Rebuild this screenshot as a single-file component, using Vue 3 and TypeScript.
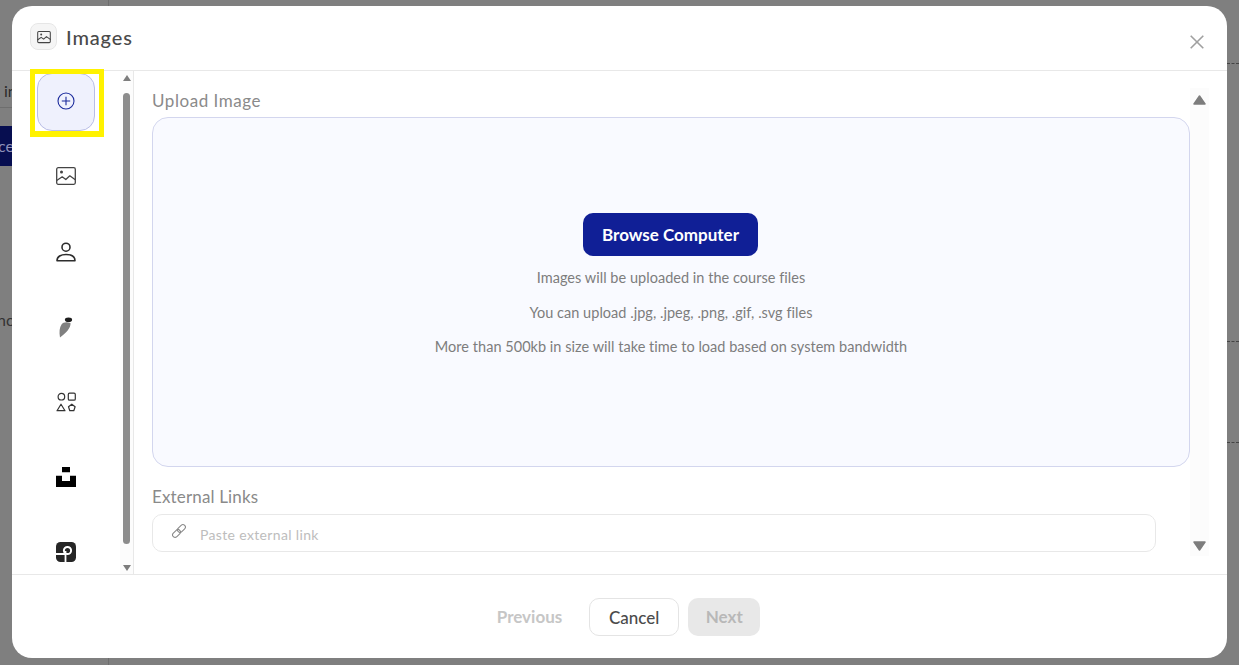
<script setup lang="ts">
const sideItems = ['add', 'image', 'user', 'feather', 'shapes', 'unsplash', 'pexels']
const notes = [
  'Images will be uploaded in the course files',
  'You can upload .jpg, .jpeg, .png, .gif, .svg files',
  'More than 500kb in size will take time to load based on system bandwidth',
]
</script>

<template>
  <div class="page">
    <div class="bg-frag bg-in">in</div>
    <div class="bg-frag bg-btn">ce</div>
    <div class="bg-frag bg-nc">nc</div>
    <div class="bg-line l1"></div>
    <div class="bg-line l2"></div>
    <div class="bg-line l3"></div>
    <div class="bg-dash d1"></div>
    <div class="bg-dash d2"></div>
    <div class="bg-dash d3"></div>

    <section class="modal">
      <header class="head">
        <div class="title-wrap">
          <span class="title-icon">
            <svg width="14" height="14" viewBox="0 0 20 20" fill="none" stroke="#444" stroke-width="1.5" stroke-linejoin="round" stroke-linecap="round">
              <rect x="1" y="2" width="18" height="16" rx="1.5" />
              <circle cx="6" cy="6.5" r="1.4" fill="#444" stroke="none" />
              <path d="M1 14l5-3.5 3.5 2.5 4-3.5 5.5 4" />
            </svg>
          </span>
          <span class="title">Images</span>
        </div>
        <button class="close" aria-label="Close">
          <svg width="14" height="14" viewBox="0 0 14 14" stroke="#a0a0a0" stroke-width="1.6" fill="none"><path d="M.7.7l12.6 12.6M13.3.7L.7 13.3" /></svg>
        </button>
      </header>

      <div class="body">
        <aside class="side">
          <div class="side-list">
            <div v-for="item in sideItems" :key="item" class="side-item" :class="{ active: item === 'add' }">
              <svg v-if="item === 'add'" class="add-icon" width="18" height="18" viewBox="0 0 18 18" fill="none" stroke="#1a2a9c" stroke-width="1.1">
                <circle cx="9" cy="9" r="8" />
                <path d="M9 4.8v8.4M4.8 9h8.4" />
              </svg>
              <svg v-else-if="item === 'image'" class="image-icon" width="20" height="18" viewBox="0 0 20 18" fill="none" stroke="#444" stroke-width="1.3" stroke-linejoin="round">
                <rect x=".7" y=".7" width="18.6" height="16.6" rx="1.5" />
                <circle cx="5.5" cy="5" r="1.5" fill="#444" stroke="none" />
                <path d="M.7 13.5l5.5-3.7 3.6 2.7 4-3.7 5.5 4" />
              </svg>
              <svg v-else-if="item === 'user'" width="20" height="20" viewBox="0 0 20 20" fill="none" stroke="#2d2d2d" stroke-width="1.6">
                <circle cx="10" cy="5.2" r="4" />
                <path d="M1 18.800c0-4.500 4-6.300 9-6.300s9 1.800 9 6.300z" stroke-linejoin="round" />
              </svg>
              <svg v-else-if="item === 'feather'" class="feather" width="16" height="22" viewBox="0 0 16 22">
                <path d="M3.500 8.500C5 6 9 5.500 12.500 7C13 12 8 17 2 21.500C1 16 1.500 11.500 3.500 8.500z" fill="#808080" />
                <ellipse cx="10.500" cy="3.800" rx="3.600" ry="2.300" fill="#1f1f1f" />
              </svg>
              <svg v-else-if="item === 'shapes'" width="20" height="20" viewBox="0 0 20 20" fill="none" stroke="#333" stroke-width="1.2" stroke-linejoin="round">
                <circle cx="5.400" cy="4.700" r="3.300" />
                <rect x="12.300" y="1.200" width="7" height="7" rx="1.300" />
                <path d="M5 12.200l4 6.500H1z" />
                <path d="M15.800 12.200l3.300 2.500-1.300 4h-4l-1.300-4z" />
              </svg>
              <svg v-else-if="item === 'unsplash'" width="20" height="20" viewBox="0 0 20 20" fill="#000">
                <path d="M6 0h8v5.200H6zM0 8.800h6v5.200h8V8.800h6V20H0z" />
              </svg>
              <svg v-else width="20" height="20" viewBox="0 0 20 20">
                <rect width="20" height="20" rx="4.500" fill="#262626" />
                <circle cx="11.500" cy="8.500" r="3.600" fill="none" stroke="#fff" stroke-width="2" />
                <path d="M0 12h9.500M9.500 9V20" stroke="#fff" stroke-width="1.800" fill="none" />
              </svg>
            </div>
          </div>
          <div class="fake-scroll side-scroll">
            <span class="arrow up small"></span>
            <span class="thumb"></span>
            <span class="arrow down small"></span>
          </div>
        </aside>

        <main class="content">
          <div class="form">
            <h3 class="label">Upload Image</h3>
            <div class="drop">
              <button class="browse">Browse Computer</button>
              <p v-for="n in notes" :key="n" class="note">{{ n }}</p>
            </div>
            <h3 class="label ext">External Links</h3>
            <div class="link-field">
              <svg width="16" height="16" viewBox="0 0 16 16" fill="none" stroke="#8a8a8a" stroke-width="1.100">
                <g transform="rotate(-45 8 8)">
                  <rect x="0" y="5.500" width="9" height="5" rx="2.500" />
                  <rect x="7" y="5.500" width="9" height="5" rx="2.500" />
                </g>
              </svg>
              <span class="placeholder">Paste external link</span>
            </div>
          </div>
          <div class="fake-scroll main-scroll">
            <svg class="tri tri-up" width="13" height="10" viewBox="0 0 13 10"><path d="M6.500 1L12 9H1z" fill="#7d7d7d" stroke="#7d7d7d" stroke-width="1.500" stroke-linejoin="round" /></svg>
            <svg class="tri tri-down" width="13" height="10" viewBox="0 0 13 10"><path d="M6.500 9L12 1H1z" fill="#7d7d7d" stroke="#7d7d7d" stroke-width="1.500" stroke-linejoin="round" /></svg>
          </div>
        </main>
      </div>

      <footer class="foot">
        <span class="prev">Previous</span>
        <button class="cancel">Cancel</button>
        <button class="next">Next</button>
      </footer>
    </section>
  </div>
</template>

<style>
html, body { margin: 0; background: #7f7f7f; overflow: hidden; }
</style>

<style scoped>
.page {
  position: relative;
  width: 1239px;
  height: 665px;
  overflow: hidden;
  background: #7f7f7f;
  padding: 6px 12px 7px;
  box-sizing: border-box;
  font-family: Lato, "Noto Sans", sans-serif;
  color: #444;
}
.bg-frag { position: absolute; left: 0; font-size: 16px; color: #333; }
.bg-in { left: 4px; top: 81px; color: #2b2b2b; }
.bg-btn { top: 126px; width: 12px; height: 40px; line-height: 40px; background: #070e50; color: #8d90b8; text-indent: -2px; overflow: hidden; }
.bg-nc { left: -3px; top: 310px; }
.bg-line { position: absolute; background: #6e6e6e; }
.l1 { left: 0; top: 107px; width: 12px; height: 1px; }
.l2 { left: 108px; top: 658px; width: 1px; height: 7px; }
.l3 { left: 108px; top: 0; width: 1px; height: 6px; }
.bg-dash { position: absolute; left: 1227px; width: 12px; border-top: 1px dashed #444; }
.d1 { top: 63px; }
.d2 { top: 341px; }
.d3 { top: 442px; }

.modal {
  position: relative;
  width: 1215px;
  height: 652px;
  background: #fff;
  border-radius: 20px;
  display: flex;
  flex-direction: column;
  overflow: hidden;
}
.head {
  height: 65px;
  flex: none;
  box-sizing: border-box;
  border-bottom: 1px solid #e8e8e8;
  display: flex;
  align-items: center;
  justify-content: space-between;
  padding: 0 23px 0 18px;
}
.title-wrap { display: flex; align-items: center; gap: 9px; margin-top: -3px; }
.title-icon {
  width: 27px;
  height: 27px;
  box-sizing: border-box;
  border: 1px solid #e6e6e6;
  background: #f5f5f5;
  border-radius: 8px;
  display: flex;
  align-items: center;
  justify-content: center;
}
.title { font-size: 20px; color: #4a4a4a; font-weight: 500; letter-spacing: .85px; }
.close { background: none; border: 0; padding: 0; display: flex; margin-top: 7px; }

.body { flex: 1; display: flex; min-height: 0; }
.side {
  width: 122px;
  flex: none;
  box-sizing: border-box;
  border-right: 1px solid #e8e8e8;
  display: flex;
}
.side-list {
  width: 108px;
  flex: none;
  display: flex;
  flex-direction: column;
  align-items: center;
  gap: 17px;
  padding-top: 2px;
  box-sizing: border-box;
  height: 503px;
  position: relative;
}
.side-item {
  width: 58px;
  height: 58px;
  flex: none;
  display: flex;
  align-items: center;
  justify-content: center;
  box-sizing: border-box;
  border-radius: 15px;
}
.side-item.active {
  position: relative;
  background: #eff1fd;
  border: 1px solid #b9bde6;
}
.side-item.active::after {
  content: "";
  position: absolute;
  left: -8px;
  top: -5px;
  width: 74px;
  height: 68px;
  box-sizing: border-box;
  border: solid #fff200;
  border-width: 5px 5px 6px 5px;
}
.add-icon { margin-top: -2px; }
.image-icon { margin-top: -2px; }
.feather { filter: blur(.6px); }
.fake-scroll { position: relative; background: #fcfcfc; }
.side-scroll { width: 13px; flex: none; }
.thumb { display: block; width: 7px; height: 451px; background: #8c8c8c; border-radius: 4px; margin: 22px 0 0 3px; }
.arrow { position: absolute; left: 50%; transform: translateX(-50%); width: 0; height: 0; border-left: 4px solid transparent; border-right: 4px solid transparent; }
.arrow.small.up { top: 4px; border-bottom: 6px solid #7d7d7d; }
.arrow.small.down { bottom: 3px; border-top: 6px solid #7d7d7d; }

.tri { position: absolute; left: 3px; }
.tri-up { top: 7px; }
.tri-down { bottom: 5px; }

.content { flex: 1; display: flex; min-width: 0; padding-left: 18px; }
.form { width: 1038px; flex: none; }
.label { margin: 20px 0 6px; font-size: 17px; line-height: 20px; font-weight: 400; color: #8a8a8a; letter-spacing: .55px; }
.label.ext { margin: 20px 0 7px; letter-spacing: .15px; }
.drop {
  width: 1038px;
  height: 350px;
  box-sizing: border-box;
  background: #f9faff;
  border: 1px solid #d3d6ee;
  border-radius: 16px;
  display: flex;
  flex-direction: column;
  align-items: center;
  padding-top: 95px;
}
.browse {
  width: 175px;
  height: 43px;
  background: #101f96;
  color: #fff;
  border: 0;
  border-radius: 10px;
  padding-bottom: 2px;
  font: 700 17px Lato, "Noto Sans", sans-serif;
  margin: 0 1px 5px 0;
}
.note { margin: 8px 0; font-size: 14.500px; line-height: 18.500px; color: #7d7d7d; letter-spacing: .03px; }
.link-field {
  width: 1004px;
  height: 38px;
  box-sizing: border-box;
  border: 1px solid #e8e8e8;
  border-radius: 10px;
  display: flex;
  align-items: center;
  padding-left: 18px;
  gap: 13px;
}
.link-field svg { margin-top: -5px; }
.placeholder { font-size: 14px; color: #bdbdbd; letter-spacing: .35px; padding-top: 2px; }
.main-scroll { width: 19px; height: 468px; margin-top: 17px; }

.foot {
  flex: none;
  height: 84px;
  box-sizing: border-box;
  border-top: 1px solid #e8e8e8;
  display: flex;
  align-items: center;
  justify-content: center;
  gap: 9px;
  padding-left: 18px;
}
.prev { font-size: 17px; font-weight: 700; color: #c6c6c6; margin-right: 18px; }
.cancel, .next { height: 38px; border-radius: 10px; font: 17px Lato, "Noto Sans", sans-serif; }
.cancel { width: 90px; background: #fff; border: 1px solid #e4e4e4; color: #4b4b4b; font-weight: 500; padding-top: 3px; }
.next { width: 72px; background: #e8e8e8; border: 0; color: #b8b8b8; font-weight: 700; }
</style>
